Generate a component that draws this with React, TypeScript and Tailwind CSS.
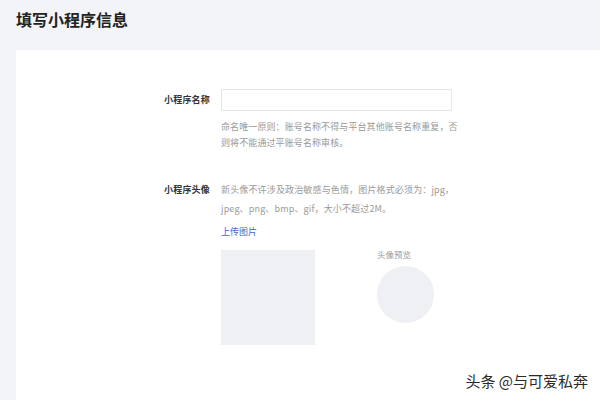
export default function App() {
  return (
    <div
      className="relative w-[600px] h-[400px] overflow-hidden bg-[#f3f4f8] text-[#333]"
      style={{ fontFamily: '"Noto Sans CJK SC", "Noto Sans", sans-serif' }}
    >
      {/* Header */}
      <div className="h-[50px] pl-[16px] pt-[7px]">
        <h1 className="text-[16px] leading-[24px] font-bold text-[#222]">填写小程序信息</h1>
      </div>

      {/* Card */}
      <div className="ml-[16px] h-[350px] bg-white pt-[39px]">
        {/* Name row */}
        <div className="flex">
          <div className="w-[194px] h-[22px] text-right text-[9px] leading-[22px] font-bold text-[#333] tracking-[0.2px]">
            小程序名称
          </div>
          <div className="ml-[11px] w-[244px]">
            <div className="w-[231px] h-[22px] rounded-[2px] border border-[#e3e5e9] bg-white" />
            <p className="mt-[8px] text-[9px] leading-[16px] text-[#9a9a9a] tracking-[0.1px]">
              命名唯一原则：账号名称不得与平台其他账号名称重复，否则将不能通过平账号名称审核。
            </p>
          </div>
        </div>

        {/* Avatar row */}
        <div className="mt-[29px] flex">
          <div className="w-[194px] text-right text-[9px] leading-[19px] font-bold text-[#333] tracking-[0.2px]">
            小程序头像
          </div>
          <div className="ml-[11px] w-[244px]">
            <p className="w-[236px] text-[9px] leading-[19px] text-[#9a9a9a] tracking-[0.15px]">
              新头像不许涉及政治敏感与色情，图片格式必须为：jpg，jpeg、png、bmp、gif，大小不超过2M。
            </p>
            <div className="mt-[7px] text-[9px] leading-[14px] text-[#3c6ac6]">上传图片</div>
            <div className="mt-[11px] flex">
              <div className="w-[94px] h-[95px] bg-[#eef0f3]" />
              <div className="ml-[62px] flex flex-col">
                <div className="-mt-[2px] text-[8.5px] leading-[12px] text-[#9a9a9a]">头像预览</div>
                <div className="mt-[6px] w-[57px] h-[57px] rounded-full bg-[#eef0f3]" />
              </div>
            </div>
          </div>
        </div>
      </div>

      {/* Watermark */}
      <div
        className="absolute right-[12px] top-[370px] text-[15px] leading-[22px] text-[#2a2a2a]"
        style={{ textShadow: '0 0 2px #fff, 0 0 2px #fff' }}
      >
        头条 @与可爱私奔
      </div>
    </div>
  )
}
